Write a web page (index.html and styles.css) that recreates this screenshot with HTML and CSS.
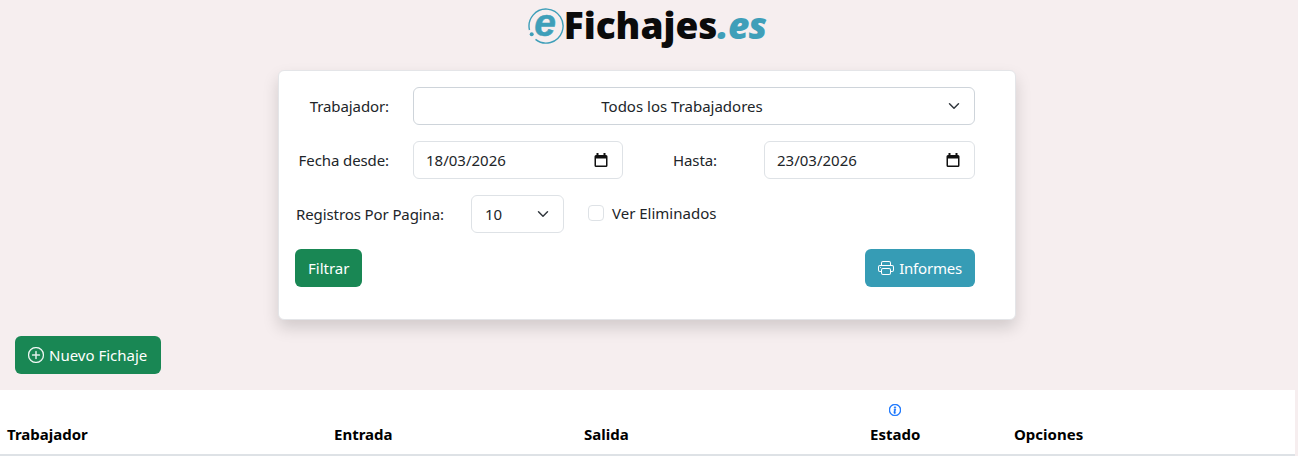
FILE: index.html
```html
<!DOCTYPE html>
<html lang="es">
<head>
  <meta charset="UTF-8">
  <title>eFichajes.es</title>
  <link rel="stylesheet" href="styles.css">
</head>

<body>

<header class="logo">
  <div class="logo-mark">
    <svg width="38" height="38" viewBox="0 0 38 38">
      <path d="M8.500 32.400 A17 17 0 1 0 2.500 23" fill="none" stroke="#3f9fb9" stroke-width="1.400"/>
      <circle cx="4.700" cy="27.300" r="2" fill="#3f9fb9"/>
    </svg>
    <span class="logo-e">e</span>
  </div>
  <span class="logo-name">Fichajes<em>.es</em></span>
</header>

<form class="card" action="javascript:void(0);">
  <div class="row">
    <label class="label label-first" for="trabajador">Trabajador:</label>
    <select class="control select-wide" id="trabajador">
      <option>Todos los Trabajadores</option>
    </select>
  </div>

  <div class="row">
    <label class="label label-first" for="desde">Fecha desde:</label>
    <div class="control date-field">
      <input type="text" id="desde" value="18/03/2026">
      <svg width="16" height="16" viewBox="0 0 16 16"><path d="M3.500 1v2H3A1.500 1.500 0 0 0 1.500 4.500v9A1.500 1.500 0 0 0 3 15h10a1.500 1.500 0 0 0 1.500-1.500v-9A1.500 1.500 0 0 0 13 3h-.5V1h-2v2h-5V1zM3 6.500h10v7H3z" fill="#111"/></svg>
    </div>
    <label class="label label-hasta" for="hasta">Hasta:</label>
    <div class="control date-field date-field-end">
      <input type="text" id="hasta" value="23/03/2026">
      <svg width="16" height="16" viewBox="0 0 16 16"><path d="M3.500 1v2H3A1.500 1.500 0 0 0 1.500 4.500v9A1.500 1.500 0 0 0 3 15h10a1.500 1.500 0 0 0 1.500-1.500v-9A1.500 1.500 0 0 0 13 3h-.5V1h-2v2h-5V1zM3 6.500h10v7H3z" fill="#111"/></svg>
    </div>
  </div>

  <div class="row">
    <label class="label label-registros" for="registros">Registros Por Pagina:</label>
    <select class="control select-small" id="registros">
      <option>10</option>
    </select>
    <label class="check">
      <input type="checkbox">
      <span>Ver Eliminados</span>
    </label>
  </div>

  <div class="row row-between">
    <button type="submit" class="btn btn-green">Filtrar</button>
    <button type="button" class="btn btn-teal">
      <svg width="16" height="16" viewBox="0 0 16 16" fill="currentColor"><path d="M2.500 8a.500.500 0 1 0 0-1 .500.500 0 0 0 0 1"/><path d="M5 1a2 2 0 0 0-2 2v2H2a2 2 0 0 0-2 2v3a2 2 0 0 0 2 2h1v1a2 2 0 0 0 2 2h6a2 2 0 0 0 2-2v-1h1a2 2 0 0 0 2-2V7a2 2 0 0 0-2-2h-1V3a2 2 0 0 0-2-2zM4 3a1 1 0 0 1 1-1h6a1 1 0 0 1 1 1v2H4zm1 5a2 2 0 0 0-2 2v1H2a1 1 0 0 1-1-1V7a1 1 0 0 1 1-1h12a1 1 0 0 1 1 1v3a1 1 0 0 1-1 1h-1v-1a2 2 0 0 0-2-2zm7 2v3a1 1 0 0 1-1 1H5a1 1 0 0 1-1-1v-3a1 1 0 0 1 1-1h6a1 1 0 0 1 1 1"/></svg>
      Informes
    </button>
  </div>
</form>

<div class="actions">
  <button type="button" class="btn btn-green">
    <svg width="16" height="16" viewBox="0 0 16 16" fill="currentColor" stroke="currentColor" stroke-width="0.300"><path d="M8 15A7 7 0 1 1 8 1a7 7 0 0 1 0 14m0 1A8 8 0 1 0 8 0a8 8 0 0 0 0 16"/><path d="M8 4a.500.500 0 0 1 .500.500v3h3a.500.500 0 0 1 0 1h-3v3a.500.500 0 0 1-1 0v-3h-3a.500.500 0 0 1 0-1h3v-3A.500.500 0 0 1 8 4"/></svg>
    Nuevo Fichaje
  </button>
</div>

<table class="fichajes">
  <thead>
    <tr>
      <th class="col-trabajador">Trabajador</th>
      <th class="col-entrada">Entrada</th>
      <th class="col-salida">Salida</th>
      <th class="col-estado">
        <span class="estado-head">
          <svg width="12" height="12" viewBox="0 0 16 16" fill="#0d6efd" stroke="#0d6efd" stroke-width="0.800"><path d="M8 15A7 7 0 1 1 8 1a7 7 0 0 1 0 14m0 1A8 8 0 1 0 8 0a8 8 0 0 0 0 16"/><path d="m8.930 6.588-2.290.287-.082.380.450.083c.294.070.352.176.288.469l-.738 3.468c-.194.897.105 1.319.808 1.319.545 0 1.178-.252 1.465-.598l.088-.416c-.200.176-.492.246-.686.246-.275 0-.375-.193-.304-.533zM9 4.500a1 1 0 1 1-2 0 1 1 0 0 1 2 0"/></svg>
          Estado
        </span>
      </th>
      <th>Opciones</th>
    </tr>
  </thead>
</table>

</body>
</html>
```

FILE: styles.css
```css
body {
  font-family: 'Noto Sans', 'Open Sans', sans-serif;
  font-size: 15px;
  line-height: 1.5;
  color: #212529;
  background-color: #f6eeef;
  margin: 0;
  padding-right: 3px;
  overflow: hidden;
}

/* Logo */
.logo {
  height: 70px;
  padding-right: 2px;
  display: flex;
  justify-content: center;
  align-items: flex-start;
}

.logo-mark {
  position: relative;
  width: 37px;
  height: 38px;
  margin-top: 7px;
}

.logo-e {
  position: absolute;
  top: 1px;
  left: 0;
  width: 37px;
  text-align: center;
  font-family: 'Liberation Sans', sans-serif;
  font-weight: 700;
  font-style: italic;
  font-size: 39px;
  line-height: 30px;
  color: #3f9fb9;
  -webkit-text-stroke: 0.5px #3f9fb9;
}

.logo-name {
  font-family: 'Open Sans', sans-serif;
  font-weight: 800;
  font-size: 37px;
  line-height: 50px;
  color: #0b0b0b;
}

.logo-name em {
  color: #3f9fb9;
  letter-spacing: -0.83px;
}

/* Filter card */
.card {
  width: 738px;
  box-sizing: border-box;
  margin-left: 278px;
  padding: 16px 40px 32px 16px;
  background-color: #ffffff;
  border: 1px solid #e4e5e8;
  border-radius: 6px;
  box-shadow: 0 8px 16px rgba(0, 0, 0, 0.15);
  display: flex;
  flex-direction: column;
  gap: 16px;
}

.row {
  display: flex;
  align-items: center;
  height: 38px;
}

.row-between {
  justify-content: space-between;
}

.label {
  white-space: nowrap;
  letter-spacing: -0.1px;
}

.label-first {
  width: 94px;
  text-align: right;
  margin-right: 24px;
}

.label-hasta {
  margin-left: 50px;
  width: 91px;
}

.label-registros {
  width: 175px;
  padding-left: 1px;
}

.control {
  height: 38px;
  box-sizing: border-box;
  border: 1px solid #dee2e6;
  border-radius: 6px;
  background-color: #ffffff;
  font: inherit;
  color: inherit;
}

select.control {
  appearance: none;
  background-image: url("data:image/svg+xml,%3csvg xmlns='http://www.w3.org/2000/svg' viewBox='0 0 16 16'%3e%3cpath fill='none' stroke='%23343a40' stroke-linecap='round' stroke-linejoin='round' stroke-width='2' d='m2 5 6 6 6-6'/%3e%3c/svg%3e");
  background-repeat: no-repeat;
  background-position: right 12px center;
  background-size: 16px 12px;
}

.select-wide {
  width: 562px;
  text-align: center;
  padding: 0 36px 0 12px;
  border-color: #ced4da;
}

.select-small {
  width: 93px;
  padding: 0 36px 0 13px;
}

.date-field {
  width: 210px;
  display: flex;
  align-items: center;
  padding: 0 13px 0 12px;
}

.date-field-end {
  width: 211px;
}

.date-field input {
  flex: 1;
  min-width: 0;
  border: none;
  outline: none;
  padding: 0;
  font: inherit;
  color: inherit;
  background: none;
}

.check {
  display: flex;
  align-items: center;
  gap: 8px;
  margin-left: 24px;
  margin-top: -2px;
}

.check input {
  appearance: none;
  width: 16px;
  height: 16px;
  margin: 0;
  border: 1px solid #dee2e6;
  border-radius: 4px;
  background-color: #ffffff;
}

/* Buttons */
.btn {
  height: 38px;
  padding: 0 13px;
  border: none;
  border-radius: 6px;
  color: #ffffff;
  font: inherit;
  cursor: pointer;
  display: inline-flex;
  align-items: center;
  gap: 5px;
}

.btn-green {
  background-color: #198754;
}

.btn-teal {
  background-color: #369cb5;
  letter-spacing: -0.2px;
}

.actions {
  padding: 16px 0 16px 15px;
}

.actions .btn {
  padding-right: 14px;
}

/* Table */
.fichajes {
  width: 100%;
  border-collapse: collapse;
  background-color: #ffffff;
  color: #000000;
}

.fichajes th {
  height: 65px;
  box-sizing: border-box;
  padding: 7px 7px 9px;
  text-align: left;
  vertical-align: bottom;
  font-weight: 700;
  border-bottom: 2px solid #dee2e6;
}

.col-trabajador {
  width: 327px;
}

.col-entrada {
  width: 250px;
}

.col-salida {
  width: 286px;
}

.col-estado {
  width: 144px;
}

.estado-head {
  display: inline-flex;
  flex-direction: column;
  align-items: center;
  gap: 7px;
}
```
